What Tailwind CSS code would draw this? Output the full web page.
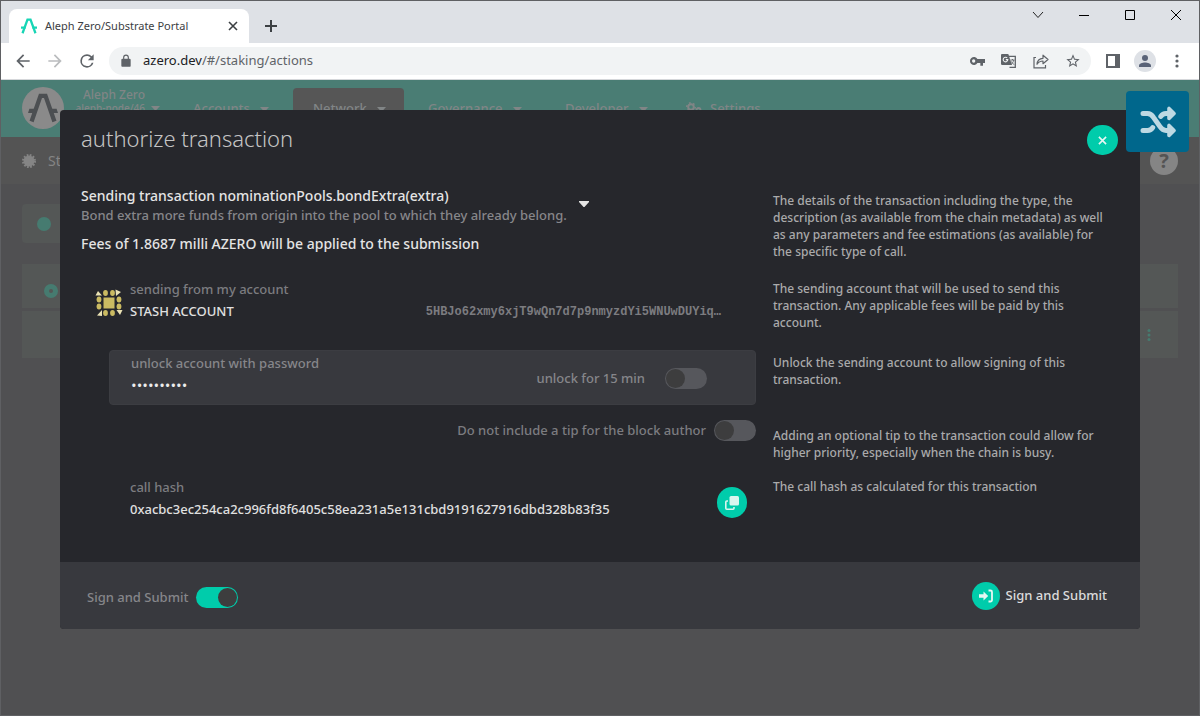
<!DOCTYPE html>
<html lang="en">
<head>
<meta charset="utf-8">
<meta name="viewport" content="width=device-width, initial-scale=1">
<title>Aleph Zero/Substrate Portal</title>
<script src="https://cdn.jsdelivr.net/npm/@tailwindcss/browser@4"></script>
</head>
<body class="min-h-screen flex flex-col bg-[#505052] border border-[#5f6063] font-['Noto_Sans','Open_Sans',sans-serif] text-[13px] overflow-x-hidden">

<!-- Browser tab strip -->
<div class="h-[42px] shrink-0 bg-[#dee1e6] flex items-start justify-between text-[#3c4043]">
  <div class="flex items-end h-full pl-2">
    <div class="h-[34px] w-60 bg-white rounded-t-lg flex items-center pl-3 pr-2 gap-2">
      <svg class="w-4 h-4 shrink-0" viewBox="0 0 42 42" fill="none" stroke="#17d5b5" stroke-width="6"><path d="M4 40 17 4h8l13 36"/><path d="M0 25h12M30 25h12"/></svg>
      <span class="flex-1 text-[11px] whitespace-nowrap">Aleph Zero/Substrate Portal</span>
      <button aria-label="Close tab" class="w-4 h-4 grid place-items-center"><svg class="w-4 h-4" viewBox="0 0 16 16" stroke="#3c4043" stroke-width="1.6"><path d="M4 4l8 8M12 4l-8 8"/></svg></button>
    </div>
    <button aria-label="New tab" class="h-[34px] w-11 grid place-items-center"><svg class="w-4 h-4" viewBox="0 0 16 16" stroke="#3c4043" stroke-width="2"><path d="M8 2v12M2 8h12"/></svg></button>
  </div>
  <div class="flex h-7">
    <button aria-label="Search tabs" class="w-[46px] grid place-items-center"><svg class="w-3 h-3" viewBox="0 0 12 12" fill="none" stroke="#222"><path d="M1 3l5 5.500 5-5.500"/></svg></button>
    <button aria-label="Minimize" class="w-[46px] grid place-items-center"><svg class="w-3 h-3" viewBox="0 0 12 12" stroke="#000"><path d="M1 6.500h10"/></svg></button>
    <button aria-label="Maximize" class="w-[46px] grid place-items-center"><svg class="w-3 h-3" viewBox="0 0 12 12" fill="none" stroke="#000"><path d="M1.500 1.500h9v9h-9z"/></svg></button>
    <button aria-label="Close window" class="w-[46px] grid place-items-center"><svg class="w-3 h-3" viewBox="0 0 12 12" stroke="#000"><path d="M1 1l10 10M11 1L1 11"/></svg></button>
  </div>
</div>

<!-- Browser toolbar -->
<div class="h-[37px] shrink-0 bg-white border-b border-[#d5d7da] flex items-center pl-3 pr-3 text-[#5f6368]">
  <button aria-label="Back" class="w-5 h-5"><svg class="w-5 h-5" viewBox="0 0 24 24" fill="#5f6368"><path d="M20 11H7.830l5.590-5.590L12 4l-8 8 8 8 1.410-1.410L7.830 13H20z"/></svg></button>
  <button aria-label="Forward" class="w-5 h-5 ml-3"><svg class="w-5 h-5" viewBox="0 0 24 24" fill="#babcbe"><path d="M4 11h12.170l-5.590-5.590L12 4l8 8-8 8-1.410-1.410L16.170 13H4z"/></svg></button>
  <button aria-label="Reload" class="w-5 h-5 ml-3"><svg class="w-5 h-5" viewBox="0 0 24 24" fill="#5f6368"><path d="M17.650 6.350A7.950 7.950 0 0 0 12 4a8 8 0 1 0 7.730 10h-2.080A6 6 0 1 1 12 6c1.660 0 3.140.69 4.220 1.780L13 11h7V4z"/></svg></button>
  <div class="flex-1 h-7 ml-3 rounded-full bg-[#f1f3f4] flex items-center pl-2.5 pr-2.5">
    <svg class="w-[14px] h-[14px] mr-[10px] shrink-0" viewBox="0 0 24 24" fill="#5f6368"><path d="M18 8h-1V6A5 5 0 0 0 7 6v2H6a2 2 0 0 0-2 2v10c0 1.100.9 2 2 2h12a2 2 0 0 0 2-2V10a2 2 0 0 0-2-2zM9 6a3 3 0 0 1 6 0v2H9z"/></svg>
    <span class="flex-1 text-[13px] whitespace-nowrap"><span class="text-[#202124]">azero.dev</span>/#/staking/actions</span>
    <div class="flex items-center gap-4">
      <button aria-label="Saved passwords"><svg class="w-4 h-4" viewBox="0 0 24 24" fill="#5f6368"><path d="M12.650 9A6 6 0 1 0 12.650 15H17v4h4v-4h3V9zM7 14.500a2.500 2.500 0 1 1 0-5 2.500 2.500 0 0 1 0 5z"/></svg></button>
      <button aria-label="Translate"><svg class="w-4 h-4" viewBox="0 0 16 16"><path d="M7 3.300h7.300v11H8.500" fill="#f1f3f4" stroke="#5f6368" stroke-width="1.300"/><path d="M1 1h6.300L11 12H1.200A1.200 1.200 0 0 1 0 10.800V2a1 1 0 0 1 1-1z" fill="#5f6368"/><path d="M6.200 5A2.300 2.300 0 1 0 6.800 6.600H4.800" fill="none" stroke="#f1f3f4" stroke-width="1.100"/><path d="M9.500 7h4M11.500 6v1M12.800 7c-.5 2-1.500 3.300-2.500 4.200M10.500 8.500c.5 1.500 1.500 2.400 2.800 3" fill="none" stroke="#5f6368" stroke-width=".9"/></svg></button>
      <button aria-label="Share"><svg class="w-4 h-4" viewBox="0 0 16 16" fill="none" stroke="#5f6368" stroke-width="1.200"><path d="M3 4.500H1v10.300h11.500V12"/><path d="M4 11.300c.3-4 2.600-5.800 6-6V2.200l5 4.300-5 4.200V8c-2.600 0-4.500.9-6 3.300z" stroke-linejoin="round"/></svg></button>
      <button aria-label="Bookmark"><svg class="w-4 h-4" viewBox="0 0 24 24" fill="#5f6368"><path d="M22 9.240l-7.190-.62L12 2 9.190 8.630 2 9.240l5.460 4.730L5.820 21 12 17.270 18.180 21l-1.630-7.030zM12 15.400l-3.760 2.270 1-4.280-3.320-2.880 4.380-.38L12 6.100l1.710 4.040 4.380.38-3.320 2.880 1 4.280z"/></svg></button>
    </div>
  </div>
  <button aria-label="Side panel" class="ml-3.5"><svg class="w-4 h-4" viewBox="0 0 16 16"><path d="M1 1h14v14H1z" fill="#5f6368"/><path d="M3 3h7v10H3z" fill="#fff"/></svg></button>
  <button aria-label="Profile" class="ml-[13px] w-[22px] h-[22px] rounded-full bg-[#dee1e6] grid place-items-center"><svg class="w-4 h-4" viewBox="0 0 16 16" fill="#5a6378"><circle cx="8" cy="5" r="3"/><path d="M2 14v-1.500C2 10.500 5.500 9.500 8 9.500s6 1 6 3V14z"/></svg></button>
  <button aria-label="Menu" class="ml-3 mr-px w-[18px] grid place-items-center"><svg class="w-4 h-4" viewBox="0 0 16 16" fill="#5f6368"><circle cx="8" cy="3" r="1.600"/><circle cx="8" cy="8" r="1.600"/><circle cx="8" cy="13" r="1.600"/></svg></button>
</div>

<!-- Page -->
<div class="relative flex-1 flex flex-col">
  <header class="h-[57px] shrink-0 bg-[#4a7d74] flex pl-[21px] text-[#818586] overflow-hidden">
    <div class="w-[42px] h-[42px] mt-[7px] rounded-full bg-[#8a8a8a] shrink-0 grid place-items-center">
      <svg class="w-[30px] h-[30px]" viewBox="0 0 42 42" fill="none" stroke="#4c4f52" stroke-width="6"><path d="M5 40 17.500 4h7L37 40"/><path d="M2 22h11l-3 6H0M40 22H29l3 6h10" fill="#4c4f52" stroke="none"/></svg>
    </div>
    <button class="w-[91px] ml-3 mt-2 h-[26px] text-right flex items-end gap-1.5 shrink-0">
      <span class="w-[69px] whitespace-nowrap flex flex-col items-end font-medium"><span class="text-[12px] leading-[14px]">Aleph Zero</span><span class="text-[10px] leading-[12px]">aleph-node/46</span></span>
      <svg class="w-[9px] h-[5px] mb-[3px]" viewBox="0 0 9 5" fill="currentColor"><path d="M0 0h9L4.500 5z"/></svg>
    </button>
    <nav class="flex mt-2 h-12 text-[13px] font-medium">
      <a href="#accounts" class="w-[126px] pl-[26px] pt-[11px] flex gap-2.5">Accounts <svg class="w-[9px] h-[5px] mt-2" viewBox="0 0 9 5" fill="currentColor"><path d="M0 0h9L4.500 5z"/></svg></a>
      <a href="#network" class="w-[111px] pl-5 pt-[11px] flex gap-2.5 bg-[#565656] rounded-t">Network <svg class="w-[9px] h-[5px] mt-2" viewBox="0 0 9 5" fill="currentColor"><path d="M0 0h9L4.500 5z"/></svg></a>
      <a href="#governance" class="w-[137px] pl-6 pt-[11px] flex gap-2.5">Governance <svg class="w-[9px] h-[5px] mt-2" viewBox="0 0 9 5" fill="currentColor"><path d="M0 0h9L4.500 5z"/></svg></a>
      <a href="#developer" class="w-[121px] pl-6 pt-[11px] flex gap-2.5">Developer <svg class="w-[9px] h-[5px] mt-2" viewBox="0 0 9 5" fill="currentColor"><path d="M0 0h9L4.500 5z"/></svg></a>
      <a href="#settings" class="pl-6 pt-[11px] flex gap-2"><svg class="w-4 h-4 mt-[3px]" viewBox="0 0 16 16" fill="none" stroke="currentColor"><circle cx="5" cy="5" r="2.800" stroke-width="2"/><circle cx="5" cy="5" r="4.200" stroke-width="1.500" stroke-dasharray="1.700 2.600"/><circle cx="12.500" cy="8" r="2" stroke-width="1.800"/></svg>Settings</a>
    </nav>
  </header>
  <div class="h-[47px] shrink-0 bg-[#545454] flex items-center justify-between pl-[21px] pr-[21px] text-[#858585]">
    <a href="#staking" class="flex items-center gap-3 text-[14px]"><svg class="w-[14px] h-[14px]" viewBox="0 0 14 14" fill="#858585"><circle cx="7" cy="7" r="5.500"/><circle cx="7" cy="7" r="6" fill="none" stroke="#858585" stroke-width="2" stroke-dasharray="1.700 1.450"/></svg>Staking</a>
    <button aria-label="Help" class="w-7 h-7 rounded-full bg-[#858585] text-[#545454] text-[20px] leading-7 font-bold">?</button>
  </div>
  <main class="pl-[21px] pr-[21px] pt-5">
    <div class="h-[39px] w-60 rounded bg-[#545756] flex items-center pl-[15px]"><span class="w-[14px] h-[14px] rounded-full bg-[#467b70]"></span></div>
    <div class="mt-[21px] h-11 bg-[#545756] flex items-center pl-[22px]"><span class="w-[14px] h-[14px] mt-2.5 rounded-full border-[5px] border-[#467b70]"></span></div>
    <div class="mt-[3px] h-[47px] bg-[#545756] flex items-center justify-end pr-[27px]"><svg class="w-[4px] h-3" viewBox="0 0 4 12" fill="#467b70"><circle cx="2" cy="1.600" r="1.500"/><circle cx="2" cy="6" r="1.500"/><circle cx="2" cy="10.400" r="1.500"/></svg></div>
  </main>

  <!-- Transaction dialog -->
  <div role="dialog" aria-labelledby="dlg-title" class="absolute inset-x-[59px] top-[30px] rounded bg-[#26272c] text-[#86868a] font-medium overflow-hidden">
    <div class="h-[76px] pl-[21px] pr-[22px] flex items-start justify-between">
      <h1 id="dlg-title" class="pt-3 text-[22px] leading-[32px] font-light text-[#c4c4c4]">authorize transaction</h1>
      <button aria-label="Close" class="mt-[15px] w-[31px] h-[30px] rounded-full bg-[#00ccab] grid place-items-center"><svg class="w-[9px] h-[9px]" viewBox="0 0 10 10" stroke="#e6f7f3" stroke-width="1.800"><path d="M1 1l8 8M9 1L1 9"/></svg></button>
    </div>

    <div class="grid grid-cols-[675px_1fr] gap-x-[17px] pl-[21px] pr-[30px] leading-[17px] text-[12px]">
      <section class="min-h-[94px] flex gap-[9px] text-[13px]">
        <div>
          <div class="text-[14px] leading-[20px] text-[#e4e4e4]">Sending transaction nominationPools.bondExtra(extra)</div>
          <div class="leading-[18px]">Bond extra more funds from origin into the pool to which they already belong.</div>
          <div class="text-[14px] leading-[20px] mt-2.5 text-[#e4e4e4]">Fees of 1.8687 milli AZERO will be applied to the submission</div>
        </div>
        <button aria-label="Show details" class="w-4 h-9 grid place-items-center"><svg class="w-[10px] h-[6px]" viewBox="0 0 10 6" fill="#e4e4e4"><path d="M0 0h10v1L5.500 6h-1L0 1z"/></svg></button>
      </section>
      <p class="pt-[6px] text-[#aaaaab]">The details of the transaction including the type, the description (as available from the chain metadata) as well as any parameters and fee estimations (as available) for the specific type of call.</p>

      <section class="min-h-[70px] flex pl-[14px]">
        <svg class="w-7 h-7 mt-[9px] shrink-0" viewBox="0 0 28 28"><path d="M8.500 8.500h11v11h-11z" fill="#cbbb62"/><g fill="#cbbb62"><ellipse cx="10.500" cy="4" rx="2.400" ry="2.900"/><ellipse cx="17.500" cy="4" rx="2.400" ry="2.900"/><ellipse cx="10.500" cy="24" rx="2.400" ry="2.900"/><ellipse cx="17.500" cy="24" rx="2.400" ry="2.900"/><ellipse cx="4" cy="10.500" rx="2.400" ry="2.900"/><ellipse cx="4" cy="17.500" rx="2.400" ry="2.900"/><ellipse cx="24" cy="10.500" rx="2.400" ry="2.900"/><ellipse cx="24" cy="17.500" rx="2.400" ry="2.900"/></g><g fill="#eae2b4"><path d="M.5 6.500 3 2l4 4.500zM20.500.5l5.500 2.500-5 4zM21.500 21h6l-2.500 5zM2 26.500 7 21v6z"/></g></svg>
        <div class="ml-[7px] flex-1 text-[13px]">
          <div class="leading-[18px] text-[#7c7c80]">sending from my account</div>
          <div class="flex items-center justify-between pr-[35px]">
            <span class="leading-[27px] text-[#e0e0e0]">STASH ACCOUNT</span>
            <span class="font-['Liberation_Mono',monospace] text-[12px] leading-[20px] font-bold text-[#7c7c80]">5HBJo62xmy6xjT9wQn7d7p9nmyzdYi5WNUwDUYiq…</span>
          </div>
        </div>
      </section>
      <p class="text-[#aaaaab]">The sending account that will be used to send this transaction. Any applicable fees will be paid by this account.</p>

      <section class="min-h-[69px] pl-7">
        <div class="h-[55px] rounded bg-[#38393e] border border-[#3c3d42] flex items-center pl-[21px] pr-12 text-[13px]">
          <div class="flex-1 self-start pt-[3px]">
            <label for="pw" class="block leading-[18px]">unlock account with password</label>
            <input id="pw" type="password" value="azeroazero" class="block w-60 h-[26px] bg-transparent outline-none font-['Open_Sans',sans-serif] font-normal text-[15px] text-[#ececec]">
          </div>
          <label class="flex items-center gap-5 pt-[2px]">unlock for 15 min
            <input type="checkbox" class="appearance-none w-[42px] h-[21px] rounded-full bg-[#56575c] before:block before:w-[19px] before:h-[19px] before:m-px before:rounded-full before:bg-[#3d3d3e]">
          </label>
        </div>
      </section>
      <p class="pt-1 text-[#aaaaab]">Unlock the sending account to allow signing of this transaction.</p>

      <section class="min-h-[59px] flex items-start justify-end text-[13px] text-[#7c7c80]">
        <label class="flex items-center gap-2 pt-px">Do not include a tip for the block author
          <input type="checkbox" class="appearance-none w-[42px] h-[21px] rounded-full bg-[#56575c] before:block before:w-[19px] before:h-[19px] before:m-px before:rounded-full before:bg-[#3d3d3e]">
        </label>
      </section>
      <p class="pt-2 text-[#aaaaab]">Adding an optional tip to the transaction could allow for higher priority, especially when the chain is busy.</p>

      <section class="min-h-[84px] flex items-start justify-between pl-[49px] pr-[9px] text-[13px]">
        <div>
          <div class="leading-[18px] text-[#7c7c80]">call hash</div>
          <div class="leading-[26px] text-[#e0e0e0]">0xacbc3ec254ca2c996fd8f6405c58ea231a5e131cbd9191627916dbd328b83f35</div>
        </div>
        <button aria-label="Copy call hash" class="mt-[9px] w-[30px] h-[31px] rounded-full bg-[#00ccab] grid place-items-center"><svg class="w-[14px] h-[14px]" viewBox="0 0 14 14"><rect x="4.500" y="0" width="9.500" height="9.500" rx="1.500" fill="#d9f6ef"/><path d="M3 5H1.800a1 1 0 0 0-1 1v6.200a1 1 0 0 0 1 1H8a1 1 0 0 0 1-1V11" fill="none" stroke="#d9f6ef" stroke-width="1.600"/></svg></button>
      </section>
      <p class="text-[#aaaaab]">The call hash as calculated for this transaction</p>
    </div>

    <footer class="h-[67px] bg-[#38393e] flex items-center justify-between pl-[27px] pr-[33px] text-[13px]">
      <label class="flex items-center gap-2 mt-1">Sign and Submit
        <input type="checkbox" checked class="appearance-none w-[42px] h-[21px] rounded-full bg-[#00ccab] flex justify-end before:block before:w-[19px] before:h-[19px] before:m-px before:rounded-full before:bg-[#3d3d3e]">
      </label>
      <button class="flex items-center gap-1.5 text-[#dcdcdc]"><span class="w-7 h-7 rounded-full bg-[#00ccab] grid place-items-center"><svg class="w-[14px] h-[14px]" viewBox="0 0 14 14"><path d="M0 5.200h4.500V2.500L9.200 7l-4.700 4.500V8.800H0z" fill="#e6f7f3"/><path d="M9.500 1.500h2a1.500 1.500 0 0 1 1.500 1.500v8a1.500 1.500 0 0 1-1.500 1.500h-2" fill="none" stroke="#e6f7f3" stroke-width="1.800"/></svg></span>Sign and Submit</button>
    </footer>
  </div>

  <!-- Queue status badge -->
  <div class="absolute right-[10px] top-[11px] w-[63px] h-[61px] rounded bg-[#00678c] grid place-items-center">
    <svg class="w-9 h-8" viewBox="0 0 36 32" fill="none" stroke="#bdd9e3" stroke-width="5" stroke-linecap="round"><path d="M3 7.500h4.500c3 0 4.500 1.500 6 3.800l6.500 9.400c1.500 2.200 3 3.800 6 3.800h2M3 24.500h4.500c2.500 0 4-1 5.200-2.800M20.800 10.300c1.200-1.800 2.700-2.800 5.200-2.800h2"/><path d="M29 2.500v10l5-5zM29 19.500v10l5-5z" fill="#bdd9e3" stroke-width="3.600" stroke-linejoin="round"/></svg>
  </div>
</div>
</body>
</html>
